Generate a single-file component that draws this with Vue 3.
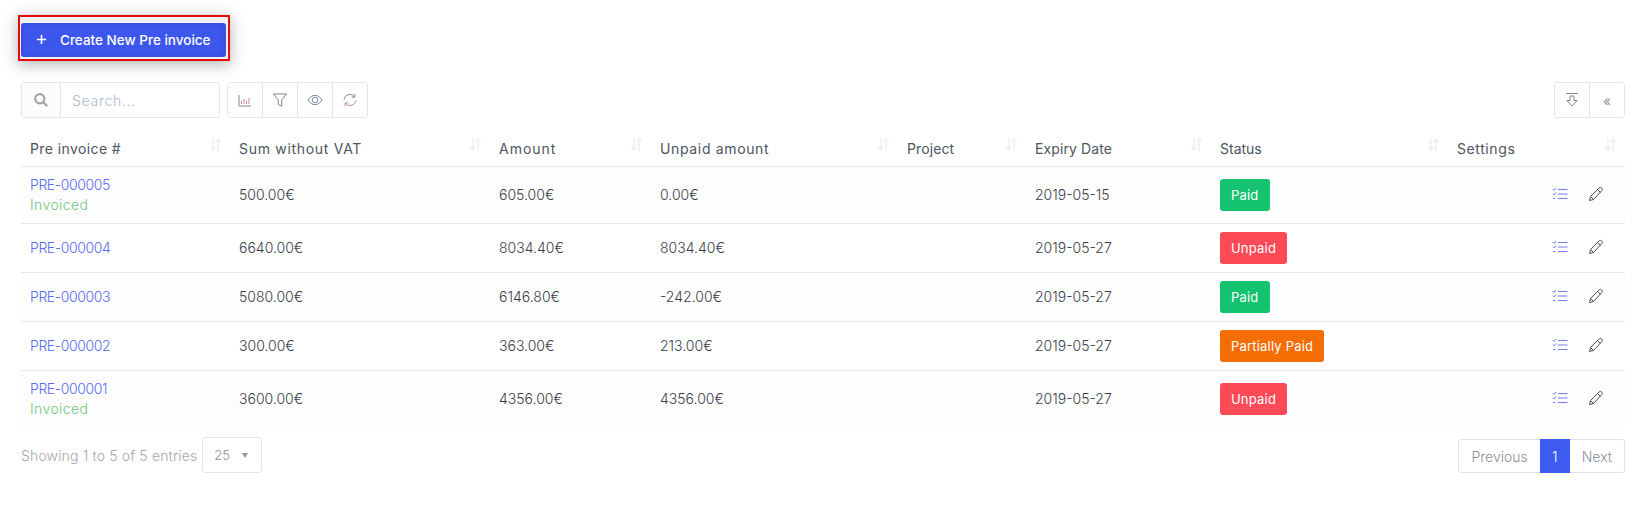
<template>
  <div class="page">
    <div class="create-wrap">
      <button class="create-btn">
        <svg class="plus" viewBox="0 0 12 12"><path d="M6 1v10M1 6h10" /></svg>
        <span>Create New Pre invoice</span>
      </button>
    </div>

    <div class="toolbar">
      <div class="search">
        <div class="search-icon">
          <svg viewBox="0 0 16 16" width="16" height="16"><circle cx="6.8" cy="6.8" r="4.6" /><path d="M10.2 10.2l4 4" /></svg>
        </div>
        <div class="search-input">Search...</div>
      </div>
      <div class="btn-group">
        <button class="tool-btn">
          <svg viewBox="0 0 14 14" width="14" height="14"><path d="M1 2v11h12" /><path class="red" d="M3.500 11V8M6 11V6M8.500 11V7.500M11 11V5" /></svg>
        </button>
        <button class="tool-btn">
          <svg viewBox="0 0 16 16" width="16" height="16"><path d="M1.500 2h13L9.700 8v6.200L6.300 12.600V8z" /></svg>
        </button>
        <button class="tool-btn">
          <svg viewBox="0 0 16 16" width="16" height="16"><path d="M1 8c2-3.200 4.400-4.600 7-4.600s5 1.400 7 4.600c-2 3.200-4.400 4.600-7 4.600S3 11.200 1 8z" /><circle cx="8" cy="8" r="2.800" /></svg>
        </button>
        <button class="tool-btn">
          <svg viewBox="0 0 16 16" width="16" height="16"><path d="M2 7.500C2.400 4.500 5 2.500 8 2.500c2 0 3.600 1 4.500 2.400M12.800 1.800v3.300H9.500" /><path class="red" d="M14 8.500c-.4 3-3 5-6 5-2 0-3.600-1-4.500-2.400M3.200 14.200v-3.300h3.300" /></svg>
        </button>
      </div>
      <div class="btn-group right">
        <button class="tool-btn">
          <svg viewBox="0 0 14 16" width="14" height="16"><path d="M1 1.500h12M5 4h4v4.500h3L7 14 2 8.500h3z" /></svg>
        </button>
        <button class="tool-btn chevrons">«</button>
      </div>
    </div>

    <table class="grid">
      <colgroup>
        <col v-for="w in colWidths" :key="w.key" :style="{ width: w.width + 'px' }" />
      </colgroup>
      <thead>
        <tr>
          <th v-for="h in headers" :key="h.label">
            <div class="th-inner">
              <span :style="{ letterSpacing: h.spacing + 'px' }">{{ h.label }}</span>
              <svg class="sort" viewBox="0 0 12 14" width="13" height="15"><path d="M3.500 1v11M1 9.500L3.500 12 6 9.500M8.500 13V2M6 4.500L8.500 2 11 4.500" /></svg>
            </div>
          </th>
        </tr>
      </thead>
      <tbody>
        <tr v-for="(row, i) in rows" :key="row.id" :class="{ odd: i % 2 === 0, tall: row.invoiced }">
          <td>
            <a class="link">{{ row.id }}</a>
            <div v-if="row.invoiced" class="invoiced">Invoiced</div>
          </td>
          <td>{{ row.sum }}</td>
          <td>{{ row.amount }}</td>
          <td>{{ row.unpaid }}</td>
          <td></td>
          <td>{{ row.expiry }}</td>
          <td><span class="badge" :class="row.statusClass">{{ row.status }}</span></td>
          <td>
            <div class="actions">
              <svg viewBox="0 0 16 14" width="16" height="14" class="blue"><path d="M6 2.500h9.500M6 7h9.500M6 11.500h9.500M.8 2.200l1.200 1.200L4 1M.8 6.700L2 7.900l2-2.400M1 11.500h2" /></svg>
              <svg viewBox="0 0 16 16" width="16" height="16" class="dark"><path d="M1.500 14.500l1-4L11 2c.8-.8 2-.8 2.700 0 .8.800.8 1.900 0 2.700L5.500 13.500zM9.500 3.500l3 3M2.500 10.500l3 3" /></svg>
            </div>
          </td>
        </tr>
      </tbody>
    </table>

    <div class="footer">
      <div class="info">
        <span class="info-text">Showing 1 to 5 of 5 entries</span>
        <div class="length">
          <span>25</span>
          <i class="caret"></i>
        </div>
      </div>
      <div class="pager">
        <span class="page-item">Previous</span>
        <span class="page-item active">1</span>
        <span class="page-item">Next</span>
      </div>
    </div>
  </div>
</template>

<script setup>
const colWidths = [209, 260, 161, 247, 128, 185, 237, 177].map((width, key) => ({ key, width }));

const headers = [
  { label: 'Pre invoice #', spacing: 0.4 },
  { label: 'Sum without VAT', spacing: 0.7 },
  { label: 'Amount', spacing: 1 },
  { label: 'Unpaid amount', spacing: 0.65 },
  { label: 'Project', spacing: 0.1 },
  { label: 'Expiry Date', spacing: 0.1 },
  { label: 'Status', spacing: 0 },
  { label: 'Settings', spacing: 0.6 }
];

const paid = 'paid';
const unpaid = 'unpaid';

const rows = [
  { id: 'PRE-000005', invoiced: true, sum: '500.00€', amount: '605.00€', unpaid: '0.00€', expiry: '2019-05-15', status: 'Paid', statusClass: paid },
  { id: 'PRE-000004', invoiced: false, sum: '6640.00€', amount: '8034.40€', unpaid: '8034.40€', expiry: '2019-05-27', status: 'Unpaid', statusClass: unpaid },
  { id: 'PRE-000003', invoiced: false, sum: '5080.00€', amount: '6146.80€', unpaid: '-242.00€', expiry: '2019-05-27', status: 'Paid', statusClass: paid },
  { id: 'PRE-000002', invoiced: false, sum: '300.00€', amount: '363.00€', unpaid: '213.00€', expiry: '2019-05-27', status: 'Partially Paid', statusClass: 'partial' },
  { id: 'PRE-000001', invoiced: true, sum: '3600.00€', amount: '4356.00€', unpaid: '4356.00€', expiry: '2019-05-27', status: 'Unpaid', statusClass: unpaid }
];
</script>

<style>
html, body {
  background: #fff;
}
</style>

<style scoped>
.page {
  width: 1633px;
  height: 511px;
  box-sizing: border-box;
  padding: 15px 8px 0 21px;
  overflow: hidden;
  font-family: "Inter", "Noto Sans", sans-serif;
  font-size: 14px;
  font-weight: 300;
  color: #3a3d48;
}

svg {
  fill: none;
  stroke: #7d8796;
  stroke-width: 1;
}

button {
  font-family: inherit;
  padding: 0;
}

.create-wrap {
  width: 212px;
  height: 46px;
  box-sizing: border-box;
  margin-left: -3px;
  padding: 6px 2px 2px 1px;
  border: 2px solid #e60a0a;
  box-shadow: 0 3px 14px rgba(60, 60, 60, 0.4);
  background: #f1f1f4;
}

.create-btn {
  display: flex;
  align-items: center;
  width: 205px;
  height: 34px;
  padding: 0 0 1px 15px;
  border: 0;
  border-radius: 3px;
  background: #3d57ee;
  color: #fff;
  font-size: 13.500px;
  font-weight: 500;
  box-shadow: inset 0 0 6px rgba(30, 40, 120, 0.3);
}

.plus {
  width: 11px;
  height: 11px;
  margin-right: 13px;
  stroke: #fff;
  stroke-width: 1.800;
}

.toolbar {
  display: flex;
  gap: 7px;
  margin-top: 21px;
  height: 36px;
}

.search {
  display: flex;
  width: 199px;
  box-sizing: border-box;
  border: 1px solid #e3e7ec;
  border-radius: 3px;
}

.search-icon {
  display: flex;
  align-items: center;
  justify-content: center;
  width: 38px;
  border-right: 1px solid #e3e7ec;
  background: #fbfcfd;
}

.search-icon svg {
  stroke: #a5a5a5;
  stroke-width: 2.200;
}

.search-input {
  display: flex;
  align-items: center;
  padding-left: 11px;
  color: #aebbcd;
  font-size: 14px;
  letter-spacing: 0.7px;
}

.btn-group {
  display: flex;
  box-sizing: border-box;
  border: 1px solid #e3e7ec;
  border-radius: 3px;
}

.btn-group.right {
  margin-left: auto;
}

.tool-btn {
  display: flex;
  align-items: center;
  justify-content: center;
  width: 34px;
  border: 0;
  background: #fff;
}

.tool-btn + .tool-btn {
  width: 35px;
  border-left: 1px solid #e3e7ec;
}

svg .red {
  stroke: #c98a8f;
}

.chevrons {
  color: #8a93a3;
  font-size: 14px;
}

.grid {
  width: 1604px;
  table-layout: fixed;
  border-collapse: collapse;
}

.grid th {
  height: 39px;
  padding: 0 9px 9px;
  border-bottom: 1px solid #e3e8ec;
  font-weight: 400;
  font-size: 14px;
  text-align: left;
  vertical-align: bottom;
  color: #4d5561;
}

.th-inner {
  display: flex;
  align-items: center;
  justify-content: space-between;
}

.sort {
  margin-top: -8px;
  margin-right: -1px;
  stroke: #eef0f2;
  stroke-width: 1.600;
}

.grid td {
  height: 47px;
  padding: 0 9px 1px;
  border-bottom: 1px solid #e3e8ec;
  color: #3a3d48;
}

.grid tr.tall td {
  height: 55px;
}

.grid tr:last-child td {
  border-bottom: 0;
}

.grid tr.odd td {
  background: #fdfdfd;
}

.link {
  color: #5a6cf0;
  letter-spacing: -0.4px;
}

.invoiced {
  margin-top: 3px;
  color: #70c77f;
  letter-spacing: 0.4px;
}

.badge {
  display: inline-block;
  padding: 0 11px;
  height: 32px;
  line-height: 32px;
  border-radius: 3px;
  color: #fff;
  font-size: 13px;
  font-weight: 400;
  letter-spacing: 0.2px;
}

.paid {
  background: #14c36f;
}

.unpaid {
  background: #fc4b57;
}

.partial {
  background: #f56e05;
}

.actions {
  display: flex;
  align-items: center;
  justify-content: flex-end;
  gap: 20px;
  padding: 0 12px 2px 0;
}

.blue {
  stroke: #6c7cf2;
}

.dark {
  stroke: #49505c;
}

.footer {
  display: flex;
  align-items: flex-start;
  justify-content: space-between;
  margin-top: 10px;
}

.info {
  display: flex;
  align-items: center;
  gap: 5px;
  color: #a3a7ae;
}

.info-text {
  letter-spacing: 0.16px;
}

.length {
  display: flex;
  align-items: center;
  width: 60px;
  height: 36px;
  box-sizing: border-box;
  padding-left: 11px;
  border: 1px solid #e1e4ea;
  border-radius: 3px;
  color: #8a8f98;
  font-size: 13px;
}

.caret {
  margin-left: 12px;
  border-left: 3.500px solid transparent;
  border-right: 3.500px solid transparent;
  border-top: 5px solid #8f959e;
}

.pager {
  display: flex;
  height: 34px;
  margin-top: 2px;
  box-sizing: border-box;
  border: 1px solid #dfe2e7;
  border-radius: 3px;
  color: #8a8f98;
}

.page-item {
  display: flex;
  align-items: center;
  padding: 0 12px;
}

.page-item.active {
  width: 30px;
  box-sizing: border-box;
  justify-content: center;
  padding: 0;
  margin: -1px 0;
  background: #3d5af1;
  color: #fff;
}
</style>
